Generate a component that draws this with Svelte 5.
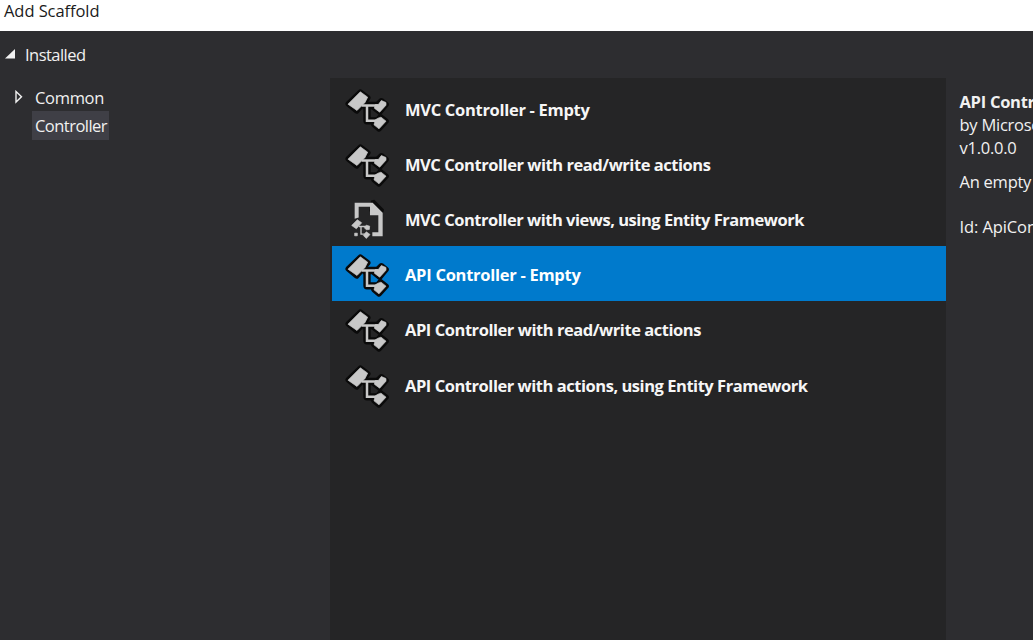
<script>
  const items = [
    { text: 'MVC Controller - Empty', width: 184.5 },
    { text: 'MVC Controller with read/write actions', width: 305.5 },
    { text: 'MVC Controller with views, using Entity Framework', width: 399, page: true },
    { text: 'API Controller - Empty', width: 175.5, selected: true },
    { text: 'API Controller with read/write actions', width: 296 },
    { text: 'API Controller with actions, using Entity Framework', width: 402.5 }
  ];

  // Spreads letter spacing so a label fills its given width.
  function fit(node, width) {
    const range = document.createRange();
    range.selectNodeContents(node);
    const natural = range.getBoundingClientRect().width;
    node.style.letterSpacing = `${(width - natural) / node.textContent.length}px`;
  }
</script>

<div class="window">
  <header><span use:fit={95.5}>Add Scaffold</span></header>
  <main>
    <nav>
      <div class="root">
        <svg width="10" height="10" viewBox="0 0 10 10"><path d="M10 0V9.5H0Z" fill="#f1f1f1" /></svg>
        <span use:fit={60.5}>Installed</span>
      </div>
      <div class="node">
        <svg width="8" height="14" viewBox="0 0 8 14"><path d="M1 1.5V12L6.5 6.7Z" fill="none" stroke="#f1f1f1" stroke-width="1.4" /></svg>
        <span class="label"><span use:fit={69}>Common</span></span>
      </div>
      <div class="node">
        <i></i>
        <span class="label active"><span use:fit={72}>Controller</span></span>
      </div>
    </nav>
    <section class="list">
      {#each items as item}
        <div class="row" class:selected={item.selected}>
          {#if item.page}
            <svg class="icon" viewBox="39 12.6 144 144">
              <path d="M123 32L133 30L162 59L160 68L144 73L118 64Z" fill="#0c0c0c" />
              <path d="M74 39H128L158 69V139H127V127H145V76H120V51H86V83L74 87Z" fill="#c8c8c8" />
              <g fill="#c8c8c8" stroke="#c8c8c8" stroke-width="2" stroke-linejoin="round">
                <path d="M82 90L95 99L79 117L65 107Z" />
                <path d="M109 106L119 109L118 119L109 120L103 114Z" />
                <path d="M109 126L120 134L109 146L100 137Z" />
                <path d="M74 130h8v8h-8z" />
              </g>
              <path d="M87 110H109M93 110V133H108" fill="none" stroke="#c8c8c8" stroke-width="4" />
            </svg>
          {:else}
            <svg class="icon" viewBox="39 22.5 144 144">
              <g fill="#0a0a0a" stroke="#0a0a0a" stroke-width="17" stroke-linejoin="round">
                <path d="M91 47L113 64L80 103L55 82Z" />
                <path d="M154 73L168 84L149 107L133 94Z" />
                <path d="M151 121L168 134L147 157L132 144Z" />
                <path d="M98 87H140M111 87V133H140" fill="none" stroke-width="22" />
              </g>
              <g fill="#c8c8c8" stroke="#c8c8c8" stroke-width="2" stroke-linejoin="round">
                <path d="M91 46L113 62L105 78L81 102L54 83Z" />
                <path d="M154 72L168 78V86L149 107L133 95L136 84H145Z" />
                <path d="M144 125L153 122L168 134L147 157L132 145L136 130Z" />
                <path d="M95 87H146M111 87V133H144" fill="none" stroke-width="7.5" stroke-linejoin="miter" />
              </g>
            </svg>
          {/if}
          <span class="name"><span use:fit={item.width}>{item.text}</span></span>
        </div>
      {/each}
    </section>
    <aside>
      <b><span use:fit={175.5}>API Controller - Empty</span></b>
      <p>by Microsoft</p>
      <p>v1.0.0.0</p>
      <p class="description">An empty API controller.</p>
      <p class="id">Id: ApiControllerEmptyScaffolder</p>
    </aside>
  </main>
</div>

<style>
  :global(body) { overflow: hidden; }
  .window {
    width: 1033px;
    height: 640px;
    display: flex;
    flex-direction: column;
    overflow: hidden;
    background: #2d2d30;
    color: #f1f1f1;
    font: 16.5px/23px 'Open Sans', 'Noto Sans', sans-serif;
    white-space: nowrap;
  }
  header {
    height: 31px;
    flex: none;
    box-sizing: border-box;
    padding-left: 4px;
    background: #fff;
    color: #1b1b1b;
    line-height: 21px;
  }
  main {
    flex: 1;
    min-height: 0;
    display: grid;
    grid-template-columns: 330px 616px 87px;
  }
  nav { padding-top: 12px; }
  .root {
    display: flex;
    align-items: center;
    gap: 10px;
    padding-left: 5px;
    margin-bottom: 17px;
  }
  .root svg { margin-bottom: 2px; }
  .node {
    display: flex;
    align-items: center;
    height: 28.4px;
    padding-left: 15px;
  }
  .node svg, .node i { width: 8px; margin-right: 9px; }
  .label { height: 28.4px; line-height: 30px; padding: 0 2px 0 3px; }
  .active { background: #3f3f46; }
  .list {
    margin-top: 47px;
    padding: 2px 0 0 2px;
    background: #252526;
    font-weight: 700;
  }
  .row {
    display: flex;
    align-items: center;
    height: 55.2px;
    padding-left: 11px;
    color: #f6f6f6;
  }
  .selected { background: #007acc; color: #fff; }
  .icon { width: 48px; height: 48px; margin-right: 14px; flex: none; }
  .name { padding-top: 3px; }
  aside { padding: 59px 0 0 13.5px; overflow: hidden; letter-spacing: -0.25px; }
  aside b { display: block; letter-spacing: 0; }
  p { margin: 0; }
  .description { margin-top: 11px; }
  .id { margin-top: 22px; letter-spacing: -0.1px; }
</style>
